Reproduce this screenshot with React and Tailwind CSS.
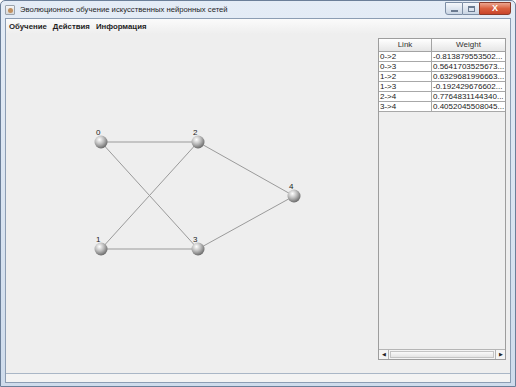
import React from "react";

const NODES = [
  { id: 0, x: 101, y: 141 },
  { id: 1, x: 101, y: 248 },
  { id: 2, x: 198, y: 141 },
  { id: 3, x: 198, y: 248 },
  { id: 4, x: 294, y: 195 },
];

const EDGES = [
  [0, 2],
  [0, 3],
  [1, 2],
  [1, 3],
  [2, 4],
  [3, 4],
];

const ROWS = [
  ["0->2", "-0.813879553502..."],
  ["0->3", "0.5641703525673..."],
  ["1->2", "0.6329681996663..."],
  ["1->3", "-0.192429676602..."],
  ["2->4", "0.7764831144340..."],
  ["3->4", "0.4052045508045..."],
];

const font = { fontFamily: '"Liberation Sans", Arial, sans-serif' };

function Graph() {
  return (
    <svg width="372" height="339" viewBox="6 33 372 339" className="block">
      <defs>
        <radialGradient id="ball" cx="0.38" cy="0.32" r="0.75">
          <stop offset="0" stopColor="#ffffff" />
          <stop offset="0.45" stopColor="#bdbdbd" />
          <stop offset="1" stopColor="#5c5c5c" />
        </radialGradient>
      </defs>
      {EDGES.map(([a, b]) => (
        <line
          key={`${a}-${b}`}
          x1={NODES[a].x}
          y1={NODES[a].y}
          x2={NODES[b].x}
          y2={NODES[b].y}
          stroke="#9a9a9a"
          strokeWidth="1"
        />
      ))}
      {NODES.map((n) => (
        <g key={n.id}>
          <circle cx={n.x} cy={n.y} r="6.5" fill="url(#ball)" />
          <text x={n.x - 5} y={n.y - 7} fontSize="8" fill="#222" style={font}>
            {n.id}
          </text>
        </g>
      ))}
    </svg>
  );
}

function TitleButtons() {
  return (
    <div className="ml-auto mr-[4px] self-start mt-[1px] flex h-[13px]">
      <div className="w-[18px] h-full rounded-bl-[3px] border border-[#7d8ea5] bg-gradient-to-b from-[#f4f7fb] to-[#c9d5e4] flex items-center justify-center">
        <div className="w-[7px] h-[2px] bg-[#6a7a90] mt-[4px]" />
      </div>
      <div className="w-[16px] h-full border-y border-[#7d8ea5] bg-gradient-to-b from-[#f4f7fb] to-[#c9d5e4] flex items-center justify-center">
        <div className="w-[7px] h-[6px] border border-[#6a7a90] border-t-2" />
      </div>
      <div className="w-[32px] h-full rounded-br-[3px] border border-[#8a3c2c] bg-gradient-to-b from-[#eba58f] via-[#d9603f] to-[#c9442a] flex items-center justify-center text-white text-[9px] font-bold leading-none" style={font}>
        X
      </div>
    </div>
  );
}

export default function App() {
  return (
    <div className="w-[516px] h-[387px] overflow-hidden flex flex-col bg-gradient-to-b from-[#e4ecf6] to-[#cfdcec] border border-[#6b7f99] rounded-t-[5px]" style={font}>
      {/* title bar */}
      <div className="h-[17px] flex items-center shrink-0">
        <div className="ml-[4px] w-[10px] h-[10px] rounded-[1px] border border-[#9aa3ad] bg-gradient-to-b from-[#f5f5f5] to-[#d8d8d8] flex items-end justify-center">
          <div className="w-[5px] h-[5px] rounded-full bg-[#c09060] mb-[1px]" />
        </div>
        <span className="ml-[5px] text-[7.7px] text-[#1e1e1e] leading-none">
          Эволюционное обучение искусственных нейронных сетей
        </span>
        <TitleButtons />
      </div>

      {/* client */}
      <div className="flex-1 mx-[4px] mb-[5px] flex flex-col bg-[#eeeeee] border border-[#8c9db3]">
        <div className="h-[15px] shrink-0 flex items-center gap-[6px] pl-[3px] bg-gradient-to-b from-[#fbfbfb] to-[#eeeeee] text-[7.8px] font-bold text-[#1e1e1e]">
          <span>Обучение</span>
          <span>Действия</span>
          <span>Информация</span>
        </div>

        <div className="flex-1 flex min-h-0">
          <div className="flex-1">
            <Graph />
          </div>
          <div className="w-[129px] mt-[4px] mb-[13px] mr-[4px] border border-[#9d9d9d] flex flex-col bg-[#efefef]">
            <div className="flex h-[13px] shrink-0 border-b border-[#a3a3a3] bg-gradient-to-b from-[#ffffff] to-[#e6e6e6] text-[8px] text-[#333]">
              <div className="w-[53px] border-r border-[#a3a3a3] flex items-center justify-center">Link</div>
              <div className="flex-1 flex items-center justify-center">Weight</div>
            </div>
            {ROWS.map(([link, w]) => (
              <div key={link} className="flex h-[10px] shrink-0 border-b border-[#a8a8a8] bg-white text-[8px] leading-none text-[#222]">
                <div className="w-[53px] border-r border-[#a8a8a8] pl-[1px] flex items-center">{link}</div>
                <div className="flex-1 pl-[1px] flex items-center whitespace-nowrap overflow-hidden">{w}</div>
              </div>
            ))}
            <div className="flex-1" />
            <div className="h-[10px] shrink-0 flex border-t border-[#b5b5b5] bg-[#f4f4f4]">
              <div className="w-[10px] border-r border-[#b5b5b5] flex items-center justify-center text-[5px] text-[#222]">◀</div>
              <div className="flex-1 m-[1px] border border-[#c4c4c4] bg-gradient-to-b from-[#fafafa] to-[#e4e4e4]" />
              <div className="w-[10px] border-l border-[#b5b5b5] flex items-center justify-center text-[5px] text-[#222]">▶</div>
            </div>
          </div>
        </div>

        <div className="h-[9px] shrink-0 border-t border-[#a9b6c6] bg-[#f3f3f3]" />
      </div>
    </div>
  );
}
